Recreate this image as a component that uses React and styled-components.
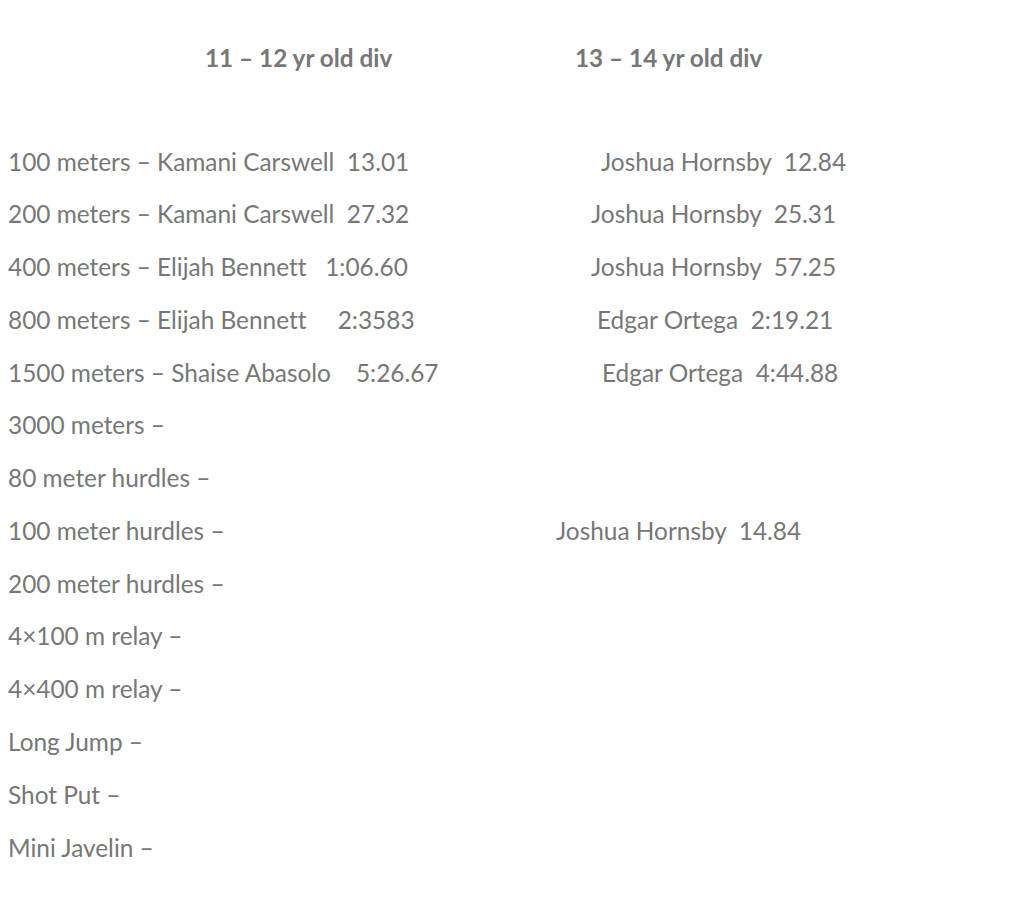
import React from 'react';
import styled, { createGlobalStyle } from 'styled-components';

const GlobalStyle = createGlobalStyle`
  body {
    margin: 0;
    background: #fff;
    font-family: Lato, "Open Sans", sans-serif;
    color: #777;
    font-variant-ligatures: none;
  }
`;

const Page = styled.div`
  padding: 43px 8px 0 8px;
`;

const Grid = styled.div`
  display: grid;
  grid-template-columns: 548px 1fr;
`;

const Heading = styled.div`
  font-size: 24.3px;
  font-weight: 700;
  line-height: 30px;
  padding-left: ${p => p.indent}px;
  margin-bottom: 62.6px;
`;

const Cell = styled.div`
  font-size: 24.4px;
  line-height: 52.77px;
  white-space: pre;
  padding-left: ${p => p.indent || 0}px;
`;

const rows = [
  ['100 meters – Kamani Carswell  13.01', 'Joshua Hornsby  12.84', 45],
  ['200 meters – Kamani Carswell  27.32', 'Joshua Hornsby  25.31', 35],
  ['400 meters – Elijah Bennett   1:06.60', 'Joshua Hornsby  57.25', 35],
  ['800 meters – Elijah Bennett     2:3583', 'Edgar Ortega  2:19.21', 41],
  ['1500 meters – Shaise Abasolo    5:26.67', 'Edgar Ortega  4:44.88', 46],
  ['3000 meters –', '', 0],
  ['80 meter hurdles –', '', 0],
  ['100 meter hurdles –', 'Joshua Hornsby  14.84', 0],
  ['200 meter hurdles –', '', 0],
  ['4×100 m relay –', '', 0],
  ['4×400 m relay –', '', 0],
  ['Long Jump –', '', 0],
  ['Shot Put –', '', 0],
  ['Mini Javelin –', '', 0],
];

export default function App() {
  return (
    <Page>
      <GlobalStyle />
      <Grid>
        <Heading indent={197}>11 – 12 yr old div</Heading>
        <Heading indent={19}>13 – 14 yr old div</Heading>
        {rows.map(([left, right, indent], i) => (
          <React.Fragment key={i}>
            <Cell>{left}</Cell>
            <Cell indent={indent}>{right}</Cell>
          </React.Fragment>
        ))}
      </Grid>
    </Page>
  );
}
